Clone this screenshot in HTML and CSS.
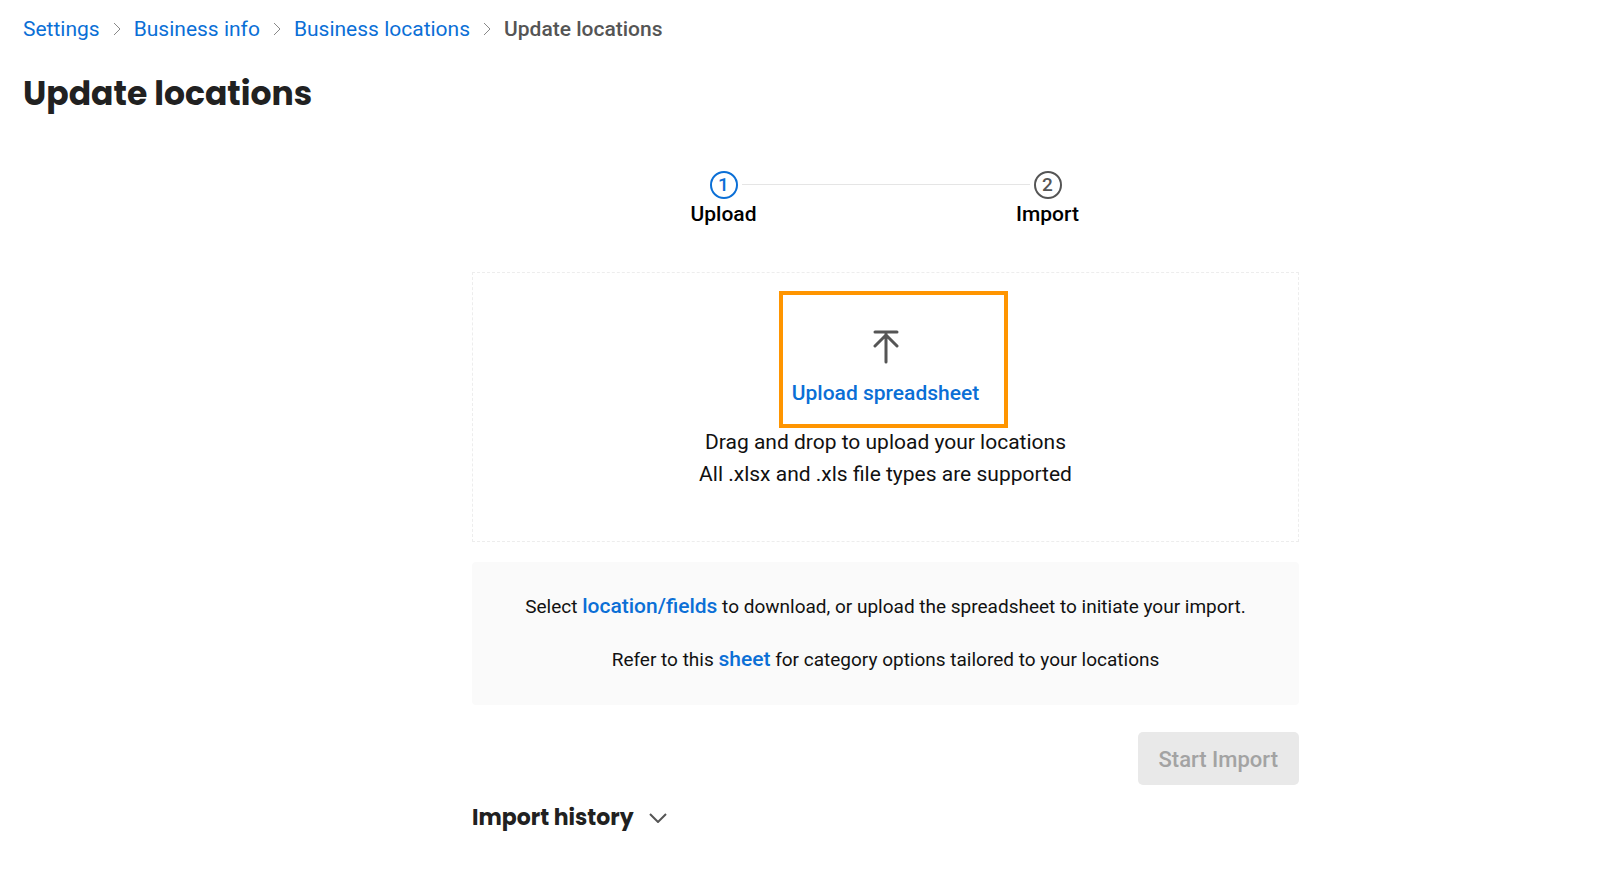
FILE: index.html
```html
<!DOCTYPE html>
<html lang="en">
<head>
    <meta charset="UTF-8">
    <meta name="viewport" content="width=device-width, initial-scale=1.0">
    <title>Update locations</title>
    <link rel="stylesheet" href="styles.css">
</head>
<body>
    <header class="page-header">
        <nav class="breadcrumb" aria-label="Breadcrumb">
            <a href="#">Settings</a>
            <svg class="separator" viewBox="0 0 8 14"><path d="M1 1l6 6-6 6"/></svg>
            <a href="#">Business info</a>
            <svg class="separator" viewBox="0 0 8 14"><path d="M1 1l6 6-6 6"/></svg>
            <a href="#">Business locations</a>
            <svg class="separator" viewBox="0 0 8 14"><path d="M1 1l6 6-6 6"/></svg>
            <span class="current">Update locations</span>
        </nav>
        <h1>Update locations</h1>
    </header>

    <main class="content">
        <div class="import-wizard">
            <ol class="steps">
                <li class="step active">
                    <span class="step-number">1</span>
                    <span class="step-label">Upload</span>
                </li>
                <li class="step-line" role="presentation"></li>
                <li class="step">
                    <span class="step-number">2</span>
                    <span class="step-label">Import</span>
                </li>
            </ol>

            <section class="dropzone">
                <div class="highlight"></div>
                <svg class="upload-icon" viewBox="0 0 26 34"><path d="M2 2h22M13 32V4M2 16L13 5l11 11"/></svg>
                <button type="button" class="upload-button">Upload spreadsheet</button>
                <p>Drag and drop to upload your locations</p>
                <p>All .xlsx and .xls file types are supported</p>
            </section>

            <section class="info">
                <p>Select <a href="#">location/fields</a> to download, or upload the spreadsheet to initiate your import.</p>
                <p>Refer to this <a href="#">sheet</a> for category options tailored to your locations</p>
            </section>

            <div class="actions">
                <button type="button" class="start-button" disabled>Start Import</button>
            </div>

            <button type="button" class="history-toggle" aria-expanded="false">
                Import history
                <svg class="chevron" viewBox="0 0 18 10"><path d="M1 1l8 8 8-8"/></svg>
            </button>
        </div>
    </main>
</body>
</html>
```
FILE: styles.css
```css
* {
    box-sizing: border-box;
}

body {
    margin: 0;
    background-color: #fff;
    color: #111;
    font-family: Roboto, sans-serif;
    font-size: 21px;
    line-height: 32px;
}

a {
    color: #0b6fd6;
    text-decoration: none;
}

a:hover {
    text-decoration: underline;
}

button {
    border: none;
    padding: 0;
    background: none;
    font-family: inherit;
    cursor: pointer;
}

svg {
    fill: none;
    stroke: #555;
}

.page-header {
    padding: 13px 23px 0;
}

.breadcrumb {
    display: flex;
    align-items: center;
    gap: 13px;
}

.breadcrumb .separator {
    width: 8px;
    height: 14px;
    stroke: #888;
}

.breadcrumb .current {
    color: #555;
    font-weight: 500;
}

h1 {
    margin: 29px 0 0;
    color: #212121;
    font-family: Poppins, Inter, sans-serif;
    font-size: 33px;
    font-weight: 700;
    line-height: 40px;
}

/* the form is centred in the area right of the side gutter */
.content {
    padding: 57px 0 0 171px;
}

.import-wizard {
    max-width: 827px;
    margin: 0 auto;
}

.steps {
    display: flex;
    justify-content: center;
    margin: 0;
    padding: 0;
    list-style: none;
}

.step {
    display: flex;
    flex-direction: column;
    align-items: center;
    width: 72px;
    color: #000;
    font-weight: 500;
}

.step-number {
    width: 28px;
    height: 28px;
    border: 2px solid #555;
    border-radius: 50%;
    color: #555;
    font-size: 19px;
    line-height: 24px;
    text-align: center;
}

.step-label {
    line-height: 30px;
}

.step.active .step-number {
    border-color: #0b6fd6;
    color: #0b6fd6;
}

.step-line {
    width: 288px;
    height: 1px;
    margin: 13px -18px 0;
    background-color: #e5e5e5;
}

.dropzone {
    position: relative;
    display: flex;
    flex-direction: column;
    align-items: center;
    margin-top: 43px;
    padding: 57px 0 51px;
    border: 1px dashed #ededed;
}

.dropzone p {
    margin: 0;
}

.upload-icon {
    width: 26px;
    height: 34px;
    stroke-width: 3;
    stroke-linecap: round;
    stroke-linejoin: round;
}

.upload-button {
    margin: 13px 0 17px;
    color: #0b6fd6;
    font-size: 21px;
    font-weight: 500;
    line-height: 32px;
}

/* orange frame around the upload control */
.highlight {
    position: absolute;
    top: 18px;
    left: 306px;
    width: 229px;
    height: 137px;
    border: 4px solid #ff9500;
    pointer-events: none;
}

.info {
    display: flex;
    flex-direction: column;
    gap: 21px;
    margin-top: 20px;
    padding: 29px 24px;
    border-radius: 4px;
    background-color: #fafafa;
    font-size: 19px;
    text-align: center;
}

.info p {
    margin: 0;
}

.info a {
    font-size: 21px;
    font-weight: 500;
    line-height: 1;
}

.actions {
    display: flex;
    justify-content: flex-end;
    margin-top: 27px;
}

.start-button {
    padding: 12px 21px 9px;
    border-radius: 5px;
    background-color: #e9e9e9;
    color: #a3a3a3;
    font-size: 22px;
    font-weight: 500;
    line-height: 32px;
    cursor: default;
}

.history-toggle {
    display: flex;
    align-items: center;
    gap: 15px;
    margin-top: 17px;
    color: #212121;
    font-family: Poppins, Inter, sans-serif;
    font-size: 22px;
    font-weight: 700;
    line-height: 32px;
}

.chevron {
    width: 18px;
    height: 10px;
    stroke-width: 2;
}
```
